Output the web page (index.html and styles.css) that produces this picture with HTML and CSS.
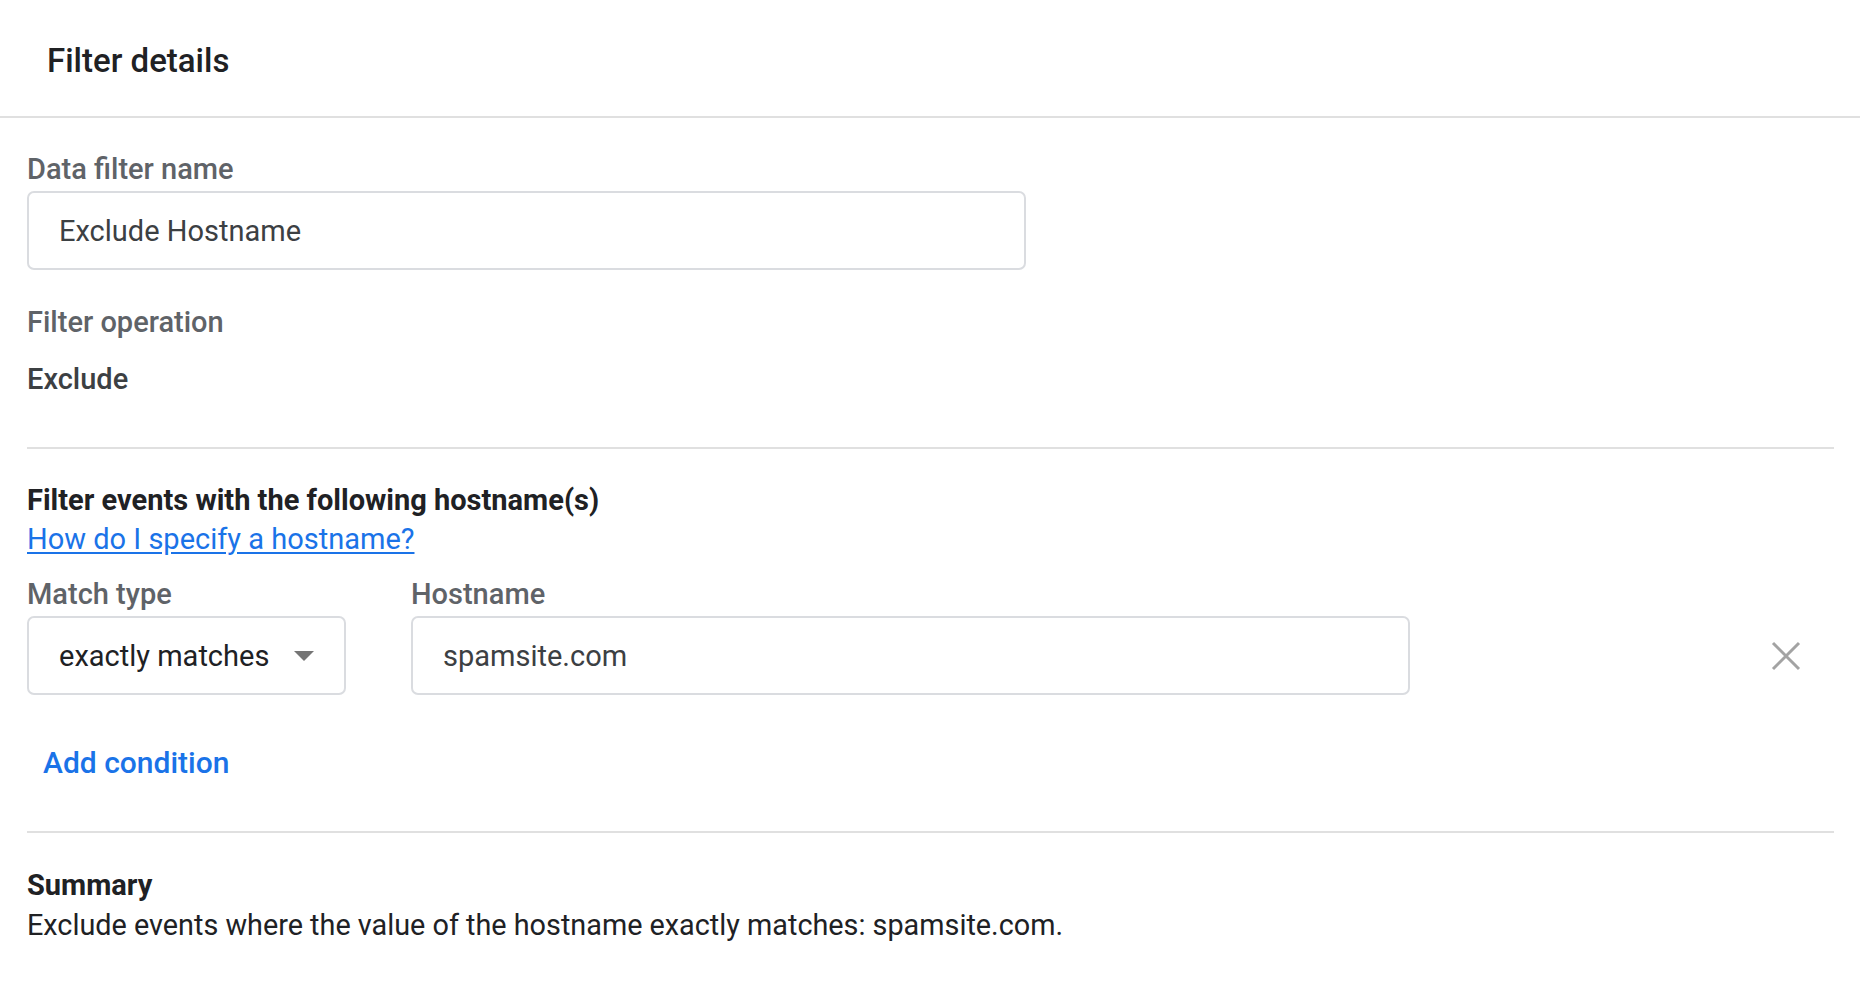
FILE: index.html
```html
<!DOCTYPE html>
<html lang="en">
<head>
<meta charset="UTF-8">
<meta name="viewport" content="width=device-width, initial-scale=1.0">
<title>Filter details</title>
<link rel="stylesheet" href="styles.css">
</head>
<body>
<div class="panel">
    <div class="panel-header">
        <h1>Filter details</h1>
    </div>
    <div class="panel-body">
        <div class="field-label">Data filter name</div>
        <div class="text-box">Exclude Hostname</div>

        <div class="field-label op-label">Filter operation</div>
        <div class="op-value">Exclude</div>

        <hr class="divider">

        <div class="section-title">Filter events with the following hostname(s)</div>
        <a class="help-link" href="#">How do I specify a hostname?</a>

        <div class="condition-row">
            <div class="match-col">
                <div class="field-label">Match type</div>
                <div class="text-box select-box">
                    <span>exactly matches</span>
                    <span class="caret"></span>
                </div>
            </div>
            <div class="host-col">
                <div class="field-label">Hostname</div>
                <div class="text-box">spamsite.com</div>
            </div>
            <button class="remove-btn" title="Remove">
                <svg width="30" height="30" viewBox="0 0 30 30">
                    <path d="M2 2 L28 28 M28 2 L2 28" stroke="#a3a3a3" stroke-width="3" fill="none"/>
                </svg>
            </button>
        </div>

        <button class="add-btn">Add condition</button>

        <hr class="divider">

        <div class="section-title summary-title">Summary</div>
        <div class="summary-text">Exclude events where the value of the hostname exactly matches: spamsite.com.</div>
    </div>
</div>
</body>
</html>
```

FILE: styles.css
```css
body {
    font-family: Roboto, "Liberation Sans", Arial, sans-serif;
    margin: 0;
    padding: 0;
    background-color: #fff;
    color: #3c4043;
}
.panel-header {
    height: 116px;
    border-bottom: 2px solid #e0e0e0;
    display: flex;
    align-items: center;
}
h1 {
    margin: 0 0 0 47px;
    font-size: 33px;
    font-weight: 500;
    color: #202124;
    position: relative;
    top: 2px;
}
.panel-body {
    padding: 33px 26px 0 27px;
}
.field-label {
    font-size: 29px;
    line-height: 36px;
    font-weight: 500;
    color: #5f6368;
    margin-bottom: 4px;
}
.text-box {
    box-sizing: border-box;
    width: 999px;
    height: 79px;
    border: 2px solid #dadce0;
    border-radius: 7px;
    padding: 0 30px;
    display: flex;
    align-items: center;
    font-size: 29px;
    color: #3c4043;
}
.op-label {
    margin-top: 34px;
}
.op-value {
    margin-top: 21px;
    font-size: 29px;
    line-height: 36px;
    font-weight: 500;
    color: #3c4043;
}
.divider {
    border: none;
    border-top: 2px solid #e0e0e0;
    margin: 50px 0 0 0;
}
.section-title {
    margin-top: 33px;
    font-size: 29px;
    line-height: 36px;
    font-weight: 700;
    color: #202124;
}
.help-link {
    display: inline-block;
    margin-top: 3px;
    font-size: 29px;
    line-height: 36px;
    color: #1a73e8;
    text-decoration: underline;
    text-underline-offset: 3px;
}
.condition-row {
    display: flex;
    align-items: flex-end;
    margin-top: 19px;
}
.match-col {
    width: 319px;
    margin-right: 65px;
}
.match-col .text-box {
    width: 319px;
    justify-content: space-between;
    color: #202124;
}
.caret {
    width: 0;
    height: 0;
    border-left: 10px solid transparent;
    border-right: 10px solid transparent;
    border-top: 10px solid #757575;
    margin-right: 0;
}
.host-col .text-box {
    width: 999px;
}
.remove-btn {
    margin-left: auto;
    width: 96px;
    height: 79px;
    border: none;
    background: none;
    display: flex;
    align-items: center;
    justify-content: center;
    padding: 0;
    cursor: pointer;
}
.add-btn {
    display: block;
    margin-top: 50px;
    margin-left: 16px;
    padding: 0;
    border: none;
    background: none;
    font-family: inherit;
    font-size: 30px;
    line-height: 36px;
    font-weight: 500;
    color: #1a73e8;
    cursor: pointer;
}
.summary-title {
    margin-top: 34px;
}
.summary-text {
    margin-top: 4px;
    font-size: 28.8px;
    line-height: 36px;
    color: #202124;
}
```
